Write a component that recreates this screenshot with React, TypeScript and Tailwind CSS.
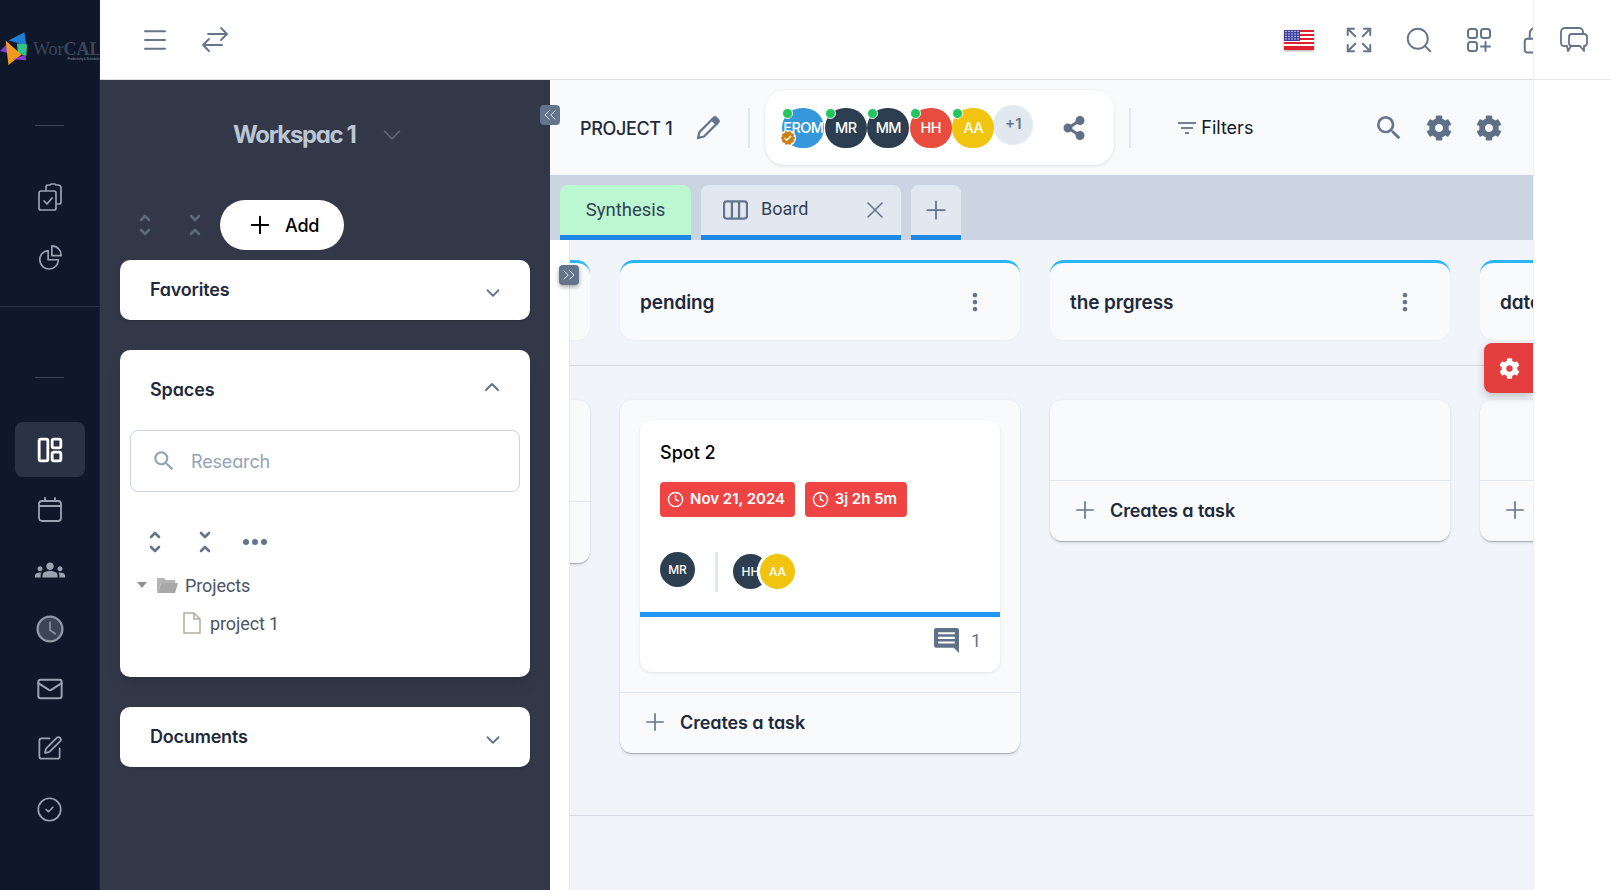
import {
  Menu, Search, Expand, Lock, X, Plus, Mail, SquarePen, CircleCheck,
  ChevronDown, ChevronUp, ChevronsLeft, ChevronsRight, Clock,
} from "lucide-react";
import { FaCog, FaShareAlt } from "react-icons/fa";
import { MdGroups, MdVerified, MdSearch, MdMoreVert } from "react-icons/md";

const sans = "font-['Inter',sans-serif] [font-feature-settings:'cv11']";
const rob = "font-['Roboto',sans-serif]";

function Unfold({ className }: { className: string }) {
  return (
    <svg viewBox="0 0 24 24" className={className} fill="none" stroke="currentColor" strokeWidth="2.6" strokeLinecap="round" strokeLinejoin="round">
      <path d="M8 7l4-4 4 4M8 17l4 4 4-4" />
    </svg>
  );
}

function Fold({ className }: { className: string }) {
  return (
    <svg viewBox="0 0 24 24" className={className} fill="none" stroke="currentColor" strokeWidth="2.6" strokeLinecap="round" strokeLinejoin="round">
      <path d="M8 3l4 4 4-4M8 21l4-4 4 4" />
    </svg>
  );
}

function Logo() {
  return (
    <div className="flex h-[80px] w-[99px] items-center overflow-hidden pt-[17px]">
      <svg viewBox="0 0 32 36" className="h-[34px] w-[30px] shrink-0">
        <path d="M9 9L26 0l2 14z" fill="#1d7fd6" />
        <path d="M18 12l11 1-1 13-9-4z" fill="#2fc28a" />
        <path d="M0 20l9-9 2 12z" fill="#7a3fd0" />
        <path d="M6 9l17 15-14 11z" fill="#f59a1d" />
        <path d="M14 29l13-5 1 6z" fill="#8e3fd8" />
      </svg>
      <div className="relative ml-[3px] font-['Liberation_Serif',serif] text-[18px] leading-none whitespace-nowrap text-[#3c4658]">
        Wor<span className="font-bold">CAL</span>
        <div className="absolute right-0 top-[18px] text-[3px] leading-none text-[#8a93a3] font-['Liberation_Sans',sans-serif]">Productivity &amp; Scheduling</div>
      </div>
    </div>
  );
}

function Sidebar() {
  return (
    <aside className="flex h-full w-[100px] shrink-0 flex-col items-stretch bg-[#0f172a] border-r border-[#1a2335]">
      <Logo />
      <div className="mx-auto mt-[45px] h-px w-[29px] bg-[#3a4456]" />
      <div className="mt-[57px] flex flex-col items-center gap-[33px]">
        <svg viewBox="0 0 26 28" className="h-[28px] w-[26px] text-[#9aa3b2]" fill="none" stroke="currentColor" strokeWidth="1.7" strokeLinecap="round" strokeLinejoin="round">
          <path d="M9 7V4a2 2 0 0 1 2-2h2a2 2 0 0 1 2-1h2a2 2 0 0 1 2 1h2a3 3 0 0 1 3 3v14a2 2 0 0 1-2 2h-2" />
          <rect x="2" y="8" width="17" height="19" rx="2" />
          <path d="M7 18l3 3 5-6" />
        </svg>
        <svg viewBox="0 0 28 28" className="h-[26px] w-[26px] text-[#9aa3b2]" fill="none" stroke="currentColor" strokeWidth="1.8" strokeLinejoin="round">
          <path d="M12 7A10 10 0 1 0 23 17H12Z" />
          <path d="M16 2A10 10 0 0 1 26 12.500H16Z" />
        </svg>
      </div>
      <div className="mt-[36px] h-px w-full bg-[#2a3345]" />
      <div className="mx-auto mt-[70px] h-px w-[29px] bg-[#3a4456]" />
      <div className="mt-[44px] flex flex-col items-center">
        <div className="flex h-[55px] w-[70px] items-center justify-center rounded-lg bg-[#2a3346]">
          <svg viewBox="0 0 24 24" className="h-[26px] w-[26px] text-white" fill="none" stroke="currentColor" strokeWidth="2.6">
            <rect x="2" y="2" width="8" height="20" rx="1.5" />
            <rect x="14" y="2" width="8" height="8" rx="1.500" />
            <rect x="14" y="14" width="8" height="8" rx="1.500" />
          </svg>
        </div>
        <div className="mt-[20px] flex flex-col items-center gap-[33.500px]">
          <svg viewBox="0 0 26 26" className="h-[26px] w-[26px] text-[#9aa3b2]" fill="none" stroke="currentColor" strokeWidth="1.8" strokeLinecap="round">
            <rect x="2" y="4" width="22" height="20" rx="3" />
            <path d="M2 9h22M8 1v3M18 1v3" />
          </svg>
          <MdGroups className="h-[30px] w-[30px] -my-[2px] text-[#9aa3b2]" />
          <svg viewBox="0 0 26 26" className="-my-px h-[28px] w-[28px]">
            <circle cx="13" cy="13" r="11.500" fill="#3c4557" stroke="#8f97a5" strokeWidth="2.200" />
            <path d="M13 6.500V14l5 3.500" fill="none" stroke="#8f97a5" strokeWidth="1.500" strokeLinecap="round" />
          </svg>
          <Mail className="h-[28px] w-[28px] -my-[1px] text-[#9aa3b2]" strokeWidth={1.7} />
          <SquarePen className="h-[27px] w-[27px] text-[#9aa3b2]" strokeWidth={1.6} />
          <CircleCheck className="h-[27px] w-[27px] text-[#9aa3b2]" strokeWidth={1.5} />
        </div>
      </div>
    </aside>
  );
}

function Accordion({ title }: { title: string }) {
  return (
    <div className="mx-[20px] flex h-[60px] items-center justify-between rounded-[10px] bg-white pl-[30px] pr-[26px] shadow-sm">
      <span className={`${sans} mb-[1px] text-[18px] font-semibold tracking-[-0.2px] text-[#1e293b]`}>{title}</span>
      <ChevronDown className="mt-[6px] h-[22px] w-[22px] text-[#64748b]" strokeWidth={2} />
    </div>
  );
}

function Panel() {
  return (
    <div className="flex h-full w-[450px] shrink-0 flex-col bg-[#323847]">
      <div className="mt-[40px] flex h-[30px] items-center pl-[133px]">
        <span className={`${sans} text-[24px] font-bold tracking-[-1.4px] text-[#bcc6d3] whitespace-nowrap`}>Workspac 1</span>
        <ChevronDown className="ml-[22px] h-[30px] w-[30px] text-[#5d687a]" strokeWidth={1.4} />
      </div>
      <div className="mt-[50px] flex h-[50px] items-center pl-[33px]">
        <Unfold className="h-[24px] w-[24px] text-[#5d687a]" />
        <Fold className="ml-[26px] h-[24px] w-[24px] text-[#5d687a]" />
        <button className="ml-[13px] flex h-[50px] w-[124px] items-center rounded-full bg-white pl-[26px]">
          <Plus className="h-[28px] w-[28px] text-black" strokeWidth={1.7} />
          <span className={`${sans} ml-[11px] text-[18px] font-medium tracking-[-0.2px] text-black`}>Add</span>
        </button>
      </div>
      <div className="mt-[10px]">
        <Accordion title="Favorites" />
      </div>
      <div className="mx-[20px] mt-[30px] h-[327px] rounded-[10px] bg-white shadow-lg">
        <div className="flex h-[80px] items-center justify-between pl-[30px] pr-[26px]">
          <span className={`${sans} mb-[1px] text-[18px] font-semibold tracking-[-0.1px] text-[#1e293b]`}>Spaces</span>
          <ChevronUp className="mb-[6px] h-[24px] w-[24px] text-[#64748b]" strokeWidth={2} />
        </div>
        <div className="mx-[10px] flex h-[62px] items-center rounded-lg border border-[#cbd5e1] pl-[20px]">
          <MdSearch className="h-[26px] w-[26px] text-[#94a3b8]" />
          <span className={`${sans} ml-[14px] text-[18px] tracking-[-0.15px] text-[#94a3b8]`}>Research</span>
        </div>
        <div className="mt-[38px] flex h-[24px] items-center pl-[23px] text-[#64748b]">
          <Unfold className="h-[24px] w-[24px]" />
          <Fold className="ml-[26px] h-[24px] w-[24px]" />
          <div className="ml-[26px] flex w-[24px] items-center justify-between">
            <span className="h-[6px] w-[6px] rounded-full bg-[#64748b]" />
            <span className="h-[6px] w-[6px] rounded-full bg-[#64748b]" />
            <span className="h-[6px] w-[6px] rounded-full bg-[#64748b]" />
          </div>
        </div>
        <div className={`${rob} mt-[19px] flex h-[24px] items-center pl-[17px] text-[18px] tracking-[-0.1px] text-[#4b5563]`}>
          <span className="h-0 w-0 border-x-[5px] border-t-[6px] border-x-transparent border-t-[#8f8f8f]" />
          <svg viewBox="0 0 22 18" className="ml-[9px] h-[18px] w-[22px]">
            <path d="M1 2h7l2 2h9v3H5L2 17H1z" fill="#b5b5b5" />
            <path d="M5 7h17l-3 10H2z" fill="#a8a8a8" />
          </svg>
          <span className="ml-[7px]">Projects</span>
        </div>
        <div className={`${rob} mt-[14px] flex h-[24px] items-center pl-[63px] text-[18px] tracking-[-0.1px] text-[#4b5563]`}>
          <svg viewBox="0 0 18 22" className="h-[22px] w-[18px]" fill="#fff" stroke="#b4aca4" strokeWidth="1.5">
            <path d="M1 1h10l6 6v14H1z" />
            <path d="M11 1v6h6" fill="none" />
          </svg>
          <span className="ml-[9px]">project 1</span>
        </div>
      </div>
      <div className="mt-[30px]">
        <Accordion title="Documents" />
      </div>
    </div>
  );
}

function Flag() {
  return (
    <svg viewBox="0 0 30 20" className="h-[20px] w-[30px] drop-shadow-[0_1px_1px_rgba(0,0,0,0.35)]">
      <rect width="30" height="20" fill="#fff" />
      {[0, 4, 8, 12, 16].map((y) => (
        <rect key={y} y={y} width="30" height="2" fill="#e0202c" />
      ))}
      <rect y="18" width="30" height="2" fill="#e0202c" />
      <rect width="16" height="11" fill="#3a3f9e" />
      {[1.500, 4, 6.500, 9].map((y) =>
        [2, 5, 8, 11, 14].map((x) => <circle key={`${x}-${y}`} cx={x} cy={y} r="0.7" fill="#fff" />),
      )}
    </svg>
  );
}

function TopBar() {
  const c = "text-[#64748b]";
  return (
    <header className="flex h-[80px] shrink-0 items-center overflow-hidden border-b border-[#d9dde3] bg-white">
      <Menu className={`${c} ml-[40px] h-[30px] w-[30px]`} strokeWidth={1.5} />
      <svg viewBox="0 0 30 28" className={`${c} ml-[30px] h-[28px] w-[30px]`} fill="none" stroke="currentColor" strokeWidth="1.8" strokeLinecap="round" strokeLinejoin="round">
        <path d="M8 8h19M21 2l6 6-6 6" />
        <path d="M22 19H3M9 13l-6 6 6 6" />
      </svg>
      <div className="ml-auto flex items-center">
        <Flag />
        <Expand className={`${c} ml-[30px] h-[30px] w-[30px]`} strokeWidth={1.6} />
        <Search className={`${c} ml-[30px] h-[30px] w-[30px]`} strokeWidth={1.5} />
        <svg viewBox="0 0 26 26" className={`${c} ml-[32px] mr-[2px] h-[26px] w-[26px]`} fill="none" stroke="currentColor" strokeWidth="2" strokeLinecap="round">
          <rect x="2" y="2" width="9" height="9" rx="2.500" />
          <rect x="15" y="2" width="9" height="9" rx="2.500" />
          <rect x="2" y="15" width="9" height="9" rx="2.500" />
          <path d="M19.500 15v9M15 19.500h9" />
        </svg>
        <Lock className={`${c} ml-[27px] -mr-[18px] h-[30px] w-[30px]`} strokeWidth={1.6} />
      </div>
    </header>
  );
}

function Avatar({ label, bg, first }: { label: string; bg: string; first?: boolean }) {
  return (
    <div className={`relative h-[40px] w-[44px] shrink-0 ${first ? "" : "-ml-[1.500px]"}`}>
      <div className={`flex h-[40px] w-[42px] items-center justify-center overflow-hidden rounded-full text-[14.500px] font-medium tracking-[-0.6px] text-white ${bg} ${sans}`}>
        {label}
      </div>
      <span className="absolute left-0 top-0 h-[11px] w-[11px] rounded-full border border-white bg-[#22c55e]" />
      {first && (
        <span className="absolute bottom-[2px] left-[-2px] flex h-[16px] w-[16px] items-center justify-center rounded-full bg-white">
          <MdVerified className="h-[16px] w-[16px] text-[#c9820f]" />
        </span>
      )}
    </div>
  );
}

function ProjectHeader() {
  return (
    <div className="flex h-[95px] shrink-0 items-center bg-[#f8fafc] pl-[30px]">
      <span className={`${sans} mt-[1px] text-[18px] font-medium tracking-[-0.35px] text-[#1e293b] whitespace-nowrap`}>PROJECT 1</span>
      <svg viewBox="0 0 26 26" className="ml-[23px] h-[26px] w-[26px] text-[#64748b]" fill="none" stroke="currentColor" strokeWidth="2.300" strokeLinejoin="round">
        <path d="M3 23l1.500-6L17 4.500l4.500 4.500L9 21.500z" />
        <path d="M18.500 3a2 2 0 0 1 2.800 0l1.700 1.700a2 2 0 0 1 0 2.800l-1.500 1.500L17 4.500z" fill="currentColor" />
      </svg>
      <div className="ml-[27px] h-[40px] w-[2px] bg-[#e2e8f0]" />
      <div className="ml-[15px] flex h-[75px] w-[349px] items-center rounded-[20px] bg-white pl-[17px] shadow-[0_1px_3px_rgba(0,0,0,0.12)]">
        <Avatar label="EROM" bg="bg-[#3498db]" first />
        <Avatar label="MR" bg="bg-[#2c3e50]" />
        <Avatar label="MM" bg="bg-[#2c3e50]" />
        <Avatar label="HH" bg="bg-[#e74c3c]" />
        <Avatar label="AA" bg="bg-[#f1c40f]" />
        <div className={`-ml-[3px] mb-[6px] flex h-[40px] w-[40px] items-center justify-center rounded-full bg-[#e2e8f0] text-[15px] font-semibold text-[#64748b] ${sans}`}>+1</div>
        <FaShareAlt className="ml-[29px] h-[24px] w-[24px] text-[#5f7186]" />
      </div>
      <div className="ml-[15px] h-[40px] w-[2px] bg-[#e2e8f0]" />
      <svg viewBox="0 0 18 12" className="ml-[47px] h-[12px] w-[18px] text-[#475569]" fill="none" stroke="currentColor" strokeWidth="1.400">
        <path d="M0 1h18M3 6h12M7 11h4" />
      </svg>
      <span className={`${sans} ml-[5px] text-[18px] text-[#111827]`}>Filters</span>
      <MdSearch className="ml-[120px] h-[32px] w-[32px] text-[#64748b]" />
      <FaCog className="ml-[21px] h-[26px] w-[26px] text-[#5f7186]" />
      <FaCog className="ml-[24px] h-[26px] w-[26px] text-[#5f7186]" />
    </div>
  );
}

function Tabs() {
  return (
    <div className="flex h-[65px] shrink-0 gap-[10px] bg-[#cbd5e1] pl-[10px] pt-[10px] shadow-sm">
      <div className={`${rob} flex w-[131px] items-center justify-center rounded-t-lg border-b-[5px] border-[#1e88e5] bg-[#bbf7d0] pt-[2px] text-[18.500px] text-[#334155]`}>Synthesis</div>
      <div className={`${rob} flex w-[200px] items-center rounded-t-lg border-b-[5px] border-[#1e88e5] bg-[#e2e8f0] pl-[22px] pr-[12px] text-[18px] text-[#334155]`}>
        <svg viewBox="0 0 26 20" className="h-[20px] w-[25px] text-[#64748b]" fill="none" stroke="currentColor" strokeWidth="2.400">
          <rect x="1" y="1" width="24" height="18" rx="3" />
          <path d="M9.300 1v18M16.700 1v18" />
        </svg>
        <span className="mb-[4px] ml-[13px]">Board</span>
        <X className="ml-auto h-[28px] w-[28px] text-[#64748b]" strokeWidth={1.4} />
      </div>
      <div className="flex w-[50px] items-center justify-center rounded-t-lg border-b-[5px] border-[#1e88e5] bg-[#e2e8f0]">
        <Plus className="h-[30px] w-[30px] text-[#64748b]" strokeWidth={1.4} />
      </div>
    </div>
  );
}

function ColumnHeader({ title }: { title?: string }) {
  return (
    <div className="flex h-[80px] w-[400px] shrink-0 items-center justify-between rounded-[14px] border-t-[3px] border-[#29b6f6] bg-[#f8fafc] pl-[20px] pr-[31px] pt-[3px] shadow-[0_1px_2px_rgba(0,0,0,0.03)]">
      <span className={`${sans} text-[19px] font-semibold tracking-[-0.1px] text-[#1e293b]`}>{title}</span>
      <MdMoreVert className="-mt-[2px] h-[28px] w-[28px] text-[#64748b]" />
    </div>
  );
}

function CreateTask() {
  return (
    <div className="flex h-[62px] items-center border-t border-[#e2e8f0] pb-[3px] pl-[21px]">
      <Plus className="h-[28px] w-[28px] text-[#64748b]" strokeWidth={1.4} />
      <span className={`${sans} ml-[11px] text-[18px] font-semibold tracking-[-0.1px] text-[#1e293b]`}>Creates a task</span>
    </div>
  );
}

function Badge({ label }: { label: string }) {
  return (
    <div className={`${sans} flex h-[35px] items-center rounded bg-[#ef4444] pl-[7px] pr-[9.500px] text-[15px] font-semibold text-white`}>
      <Clock className="mr-[6px] h-[17px] w-[17px]" strokeWidth={2} />
      {label}
    </div>
  );
}

function TaskCard() {
  return (
    <div className="mx-[20px] mt-[20px] h-[252px] rounded-xl bg-white shadow-[0_1px_3px_rgba(0,0,0,0.1)]">
      <div className={`${sans} px-[20px] pt-[21px] text-[18px] font-medium leading-[24px] text-black`}>Spot 2</div>
      <div className="mt-[17px] flex gap-[10px] px-[20px]">
        <Badge label="Nov 21, 2024" />
        <Badge label="3j 2h 5m" />
      </div>
      <div className={`${sans} mt-[35px] flex h-[40px] items-start px-[20px] text-[12px] font-medium text-white`}>
        <div className="flex h-[35px] w-[35px] items-center justify-center rounded-full bg-[#2c3e50]">MR</div>
        <div className="ml-[20px] h-[40px] w-[3px] bg-[#e2e8f0]" />
        <div className="relative ml-[15px] mt-[2px] flex">
          <div className="flex h-[35px] w-[35px] items-center justify-center rounded-full bg-[#2c3e50]">HH</div>
          <div className="-ml-[8px] flex h-[35px] w-[35px] items-center justify-center rounded-full bg-[#f1c40f] shadow-[0_0_0_3px_#fff]">AA</div>
        </div>
      </div>
      <div className="mt-[20px] h-[5px] bg-[#2196f3]" />
      <div className={`${rob} flex h-[50px] items-center justify-end pb-[4px] pr-[19px] text-[18px] text-[#64748b]`}>
        <svg viewBox="0 0 26 26" className="h-[27px] w-[27px] text-[#5f7186]">
          <path d="M3 1h20a2 2 0 0 1 2 2v22l-5-5H3a2 2 0 0 1-2-2V3a2 2 0 0 1 2-2z" fill="currentColor" />
          <path d="M5 6h16M5 10.500h16M5 15h16" stroke="#fff" strokeWidth="2" />
        </svg>
        <span className="ml-[11px]">1</span>
      </div>
    </div>
  );
}

function Board() {
  const body = "w-[400px] shrink-0 overflow-hidden rounded-[12px] border-b border-[#a9afb8] bg-[#f8fafc] shadow-[0_1px_3px_rgba(0,0,0,0.12)]";
  return (
    <div className="relative flex min-h-0 flex-1">
      <div className="w-[20px] shrink-0 border-r border-[#e2e8f0] bg-white" />
      <div className="min-w-0 flex-1 overflow-hidden bg-[#f1f5f9]">
        <div className="-ml-[380px] flex gap-[30px] border-b border-[#d5dae2] pb-[25px] pt-[20px]">
          <ColumnHeader />
          <ColumnHeader title="pending" />
          <ColumnHeader title="the prgress" />
          <ColumnHeader title="date" />
        </div>
        <div className="-ml-[380px] flex h-[450px] items-start gap-[30px] border-b border-[#d5dae2] pt-[34px]">
          <div className={`${body} h-[164px]`}>
            <div className="h-[102px] border-b border-[#e2e8f0]" />
          </div>
          <div className={`${body} h-[354px]`}>
            <TaskCard />
            <div className="mt-[20px]"><CreateTask /></div>
          </div>
          <div className={`${body} h-[142px]`}>
            <div className="h-[80px]" />
            <CreateTask />
          </div>
          <div className={`${body} h-[142px]`}>
            <div className="h-[80px]" />
            <CreateTask />
          </div>
        </div>
      </div>
      <button className="absolute left-[9px] top-[25px] flex h-[20px] w-[20px] items-center justify-center rounded bg-[#64748b] text-[#e2e8f0] shadow-[0_2px_4px_rgba(0,0,0,0.35)]">
        <ChevronsRight className="h-[20px] w-[20px]" strokeWidth={1.2} />
      </button>
      <button className="absolute right-0 top-[103px] flex h-[50px] w-[49px] items-center justify-center rounded-l-lg bg-[#e53e3e] pl-[1px] shadow-[0_4px_8px_rgba(0,0,0,0.2)]">
        <FaCog className="h-[21px] w-[21px] text-white" />
      </button>
    </div>
  );
}

export default function App() {
  return (
    <div className="flex h-[890px] w-[1611px] overflow-hidden bg-white">
      <Sidebar />
      <div className="flex h-full min-w-0 flex-1 flex-col">
        <TopBar />
        <div className="relative flex min-h-0 flex-1">
          <Panel />
          <div className="flex min-w-0 flex-1 flex-col overflow-hidden">
            <ProjectHeader />
            <Tabs />
            <Board />
          </div>
          <button className="absolute left-[440px] top-[25px] flex h-[20px] w-[20px] items-center justify-center rounded bg-[#64748b] text-[#e2e8f0]">
            <ChevronsLeft className="h-[20px] w-[20px]" strokeWidth={1.2} />
          </button>
        </div>
      </div>
      <div className="h-full w-[78px] shrink-0 border-l border-[#eef0f3] bg-white">
        <div className="flex h-[80px] items-center justify-center border-b border-[#e5e7eb]">
          <svg viewBox="0 0 28 26" className="ml-[2px] h-[26px] w-[28px] text-[#64748b]" fill="none" stroke="currentColor" strokeWidth="1.8" strokeLinecap="round" strokeLinejoin="round">
            <path d="M23 7V5a4 4 0 0 0-4-4H5a4 4 0 0 0-4 4v11a3 3 0 0 0 4 3h2l1 5 3-5" />
            <path d="M12 7h12a3 3 0 0 1 3 3v6a3 3 0 0 1-3 3v5l-4-5h-8a3 3 0 0 1-3-3v-6a3 3 0 0 1 3-3z" />
          </svg>
        </div>
      </div>
    </div>
  );
}
